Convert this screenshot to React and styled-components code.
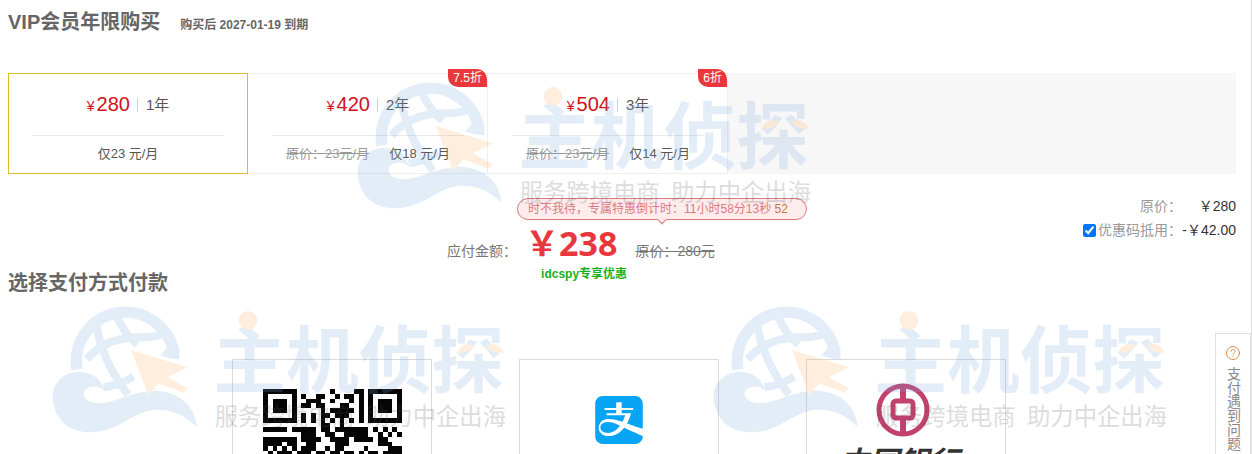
import React from 'react';
import styled, { createGlobalStyle } from 'styled-components';
import { SiAlipay } from 'react-icons/si';

const GlobalStyle = createGlobalStyle`
    * {
        box-sizing: border-box;
    }

    body {
        margin: 0;
        background: #fff;
        color: #666;
        font-family: "Liberation Sans", "Noto Sans CJK SC", sans-serif;
        font-size: 14px;
    }
`;

const Page = styled.div`
    position: relative;
    height: 100vh;
    margin-right: 1px;
    padding: 0 15px 0 8px;
    border-right: 1px solid #e2e2e2;
    overflow: hidden;
`;

const Header = styled.header`
    display: flex;
    align-items: baseline;
    gap: 20px;
    height: 43px;
    margin-bottom: 30px;
    line-height: 44px;
`;

const Title = styled.h1`
    margin: 0;
    font-size: 20px;
    font-weight: bold;
    color: #666;
`;

const Expire = styled.strong`
    font-size: 12px;
    color: #666;
`;

const Plans = styled.div`
    display: flex;
    background: #f7f7f7;
`;

const Plan = styled.button`
    position: relative;
    width: 240px;
    padding: 0 23px;
    border: 1px solid ${props => (props.$active ? '#dcbb28' : '#eee')};
    border-left-color: ${props => (props.$active ? '#dcbb28' : '#fff')};
    background: #fff;
    color: #555;
    font-family: inherit;
    cursor: pointer;
`;

const PlanPrice = styled.span`
    display: flex;
    align-items: center;
    justify-content: center;
    height: 62px;
    border-bottom: 1px solid #e8e8e8;
    font-size: 15px;
`;

const Money = styled.span`
    color: #d0111b;
    font-size: 14px;
    line-height: 24px;
`;

const Num = styled.span`
    margin-left: 2px;
    font-size: 20px;
`;

const Years = styled.span`
    margin-left: 7px;
    padding-left: 8px;
    border-left: 1px solid #ccc;
    line-height: 14px;
`;

const PlanMonth = styled.span`
    display: flex;
    justify-content: center;
    gap: 20px;
    height: 37px;
    font-size: 13px;
    line-height: 36px;
    white-space: nowrap;
`;

const OldPrice = styled.del`
    color: #999;
`;

const Badge = styled.span`
    position: absolute;
    top: -5px;
    right: 0;
    padding: 0 5px;
    border-radius: 0 10px 0 10px;
    background: #e8383d;
    color: #fff;
    font-size: 12px;
    line-height: 18px;
`;

const Checkout = styled.section`
    display: grid;
    grid-template-columns: 1fr auto 1fr;
    height: 124px;
`;

const PayTitle = styled.h2`
    align-self: end;
    margin: 0;
    font-size: 20px;
    line-height: 30px;
    color: #666;
`;

const Amount = styled.div`
    display: grid;
    grid-template-columns: 70px auto;
    align-content: start;
    margin-left: 10px;
    padding-top: 24px;
`;

const Countdown = styled.div`
    position: relative;
    grid-column: 2;
    padding: 0 18px 0 10px;
    border: 1px solid #dc7a7d;
    border-radius: 11px;
    background: #feeced;
    color: #dc7a7d;
    font-size: 12px;
    line-height: 20px;
    white-space: nowrap;

    &::after {
        content: '';
        position: absolute;
        left: 50%;
        bottom: -4px;
        width: 6px;
        height: 6px;
        border: solid #dc7a7d;
        border-width: 0 1px 1px 0;
        background: #feeced;
        transform: translateX(-50%) rotate(45deg);
    }
`;

const Tick = styled.span`
    color: #c87a32;
`;

const AmountLabel = styled.span`
    padding-top: 20px;
    line-height: 22px;
    color: #777;
    white-space: nowrap;
`;

const AmountRow = styled.div`
    display: flex;
    align-items: baseline;
    gap: 18px;
    height: 44px;
    padding-left: 8px;
    line-height: 46px;
    color: #777;
`;

const Total = styled.strong`
    color: #e8383d;
    font-family: "Open Sans", "Noto Sans CJK SC", sans-serif;
    font-size: 34px;
`;

const Discount = styled.strong`
    grid-column: 2;
    padding-left: 24px;
    color: #18b01c;
    font-size: 12px;
    line-height: 20px;
`;

const Summary = styled.div`
    display: flex;
    flex-direction: column;
    padding-top: 20px;
    line-height: 24px;
    color: #999;
`;

const SummaryRow = styled.div`
    display: flex;
    align-items: center;
    justify-content: flex-end;
`;

const Coupon = styled.label`
    display: flex;
    align-items: center;
    gap: 2px;
`;

const Check = styled.input`
    width: 13px;
    height: 13px;
    margin: 0;
`;

const SummaryValue = styled.span`
    width: 54px;
    color: #333;
    text-align: right;
    white-space: nowrap;
`;

const Payments = styled.div`
    display: flex;
    justify-content: center;
    gap: 87px;
    margin: 61px 6px 0 0;
`;

const Payment = styled.a`
    display: flex;
    align-items: flex-start;
    justify-content: center;
    width: 200px;
    height: 200px;
    padding-top: ${props => props.$top}px;
    border: 1px solid #dadada;
    color: #08a5f5;
`;

const Help = styled.a`
    position: fixed;
    top: 333px;
    right: 2px;
    display: flex;
    flex-direction: column;
    align-items: center;
    gap: 7px;
    width: 36px;
    height: 150px;
    padding-top: 12px;
    border: 1px solid #e2e2e2;
    background: #fff;
    color: #888;
    text-decoration: none;
`;

const HelpText = styled.span`
    writing-mode: vertical-rl;
    line-height: 18px;
`;

const Mark = styled.svg`
    position: absolute;
    left: ${props => props.$x}px;
    top: ${props => props.$y}px;
    width: 454px;
    height: 128px;
    opacity: 0.2;
    pointer-events: none;
`;

const plans = [
    { price: 280, years: 1, month: 23 },
    { price: 420, years: 2, month: 18, badge: '7.5折' },
    { price: 504, years: 3, month: 14, badge: '6折' },
];

const qrRows = [
    '11111110000000100001101111111',
    '10000010100110010110101000001',
    '10111010011100100010101011101',
    '10111010110110001100101011101',
    '10111010000010111110101011101',
    '10000010101011011100101000001',
    '11111110101010101010101111111',
    '00000000000011001000000000000',
    '11111011111011011111110101010',
    '00000000111001100111110010101',
    '11111110111100111101111011000',
    '11110110011000011100000011100',
    '10101010111001011000010000111',
    '01011101110110110110101101111',
];

function QrCode() {
    return (
        <svg width="139" height="68" viewBox="0 0 290 142" shapeRendering="crispEdges">
            {qrRows.map((row, y) =>
                row.split('').map((bit, x) =>
                    bit === '1' ? <rect key={x + '-' + y} x={x * 10} y={y * 10} width="10" height="10" fill="#050505" /> : null
                )
            )}
        </svg>
    );
}

function BankLogo() {
    return (
        <svg width="198" height="120" viewBox="0 0 198 120">
            <g fill="none" stroke="#c3416f">
                <circle cx="96" cy="27" r="24" strokeWidth="5" />
                <path d="M96 2v15M96 35v17" strokeWidth="6" />
                <rect x="86" y="18" width="20" height="17" rx="3" strokeWidth="5" />
            </g>
            <text x="32" y="90" fill="#333" fontSize="30" fontWeight="bold" fontStyle="italic">中国银行</text>
        </svg>
    );
}

function HelpIcon() {
    return (
        <svg width="14" height="14" viewBox="0 0 14 14" fill="none" stroke="#e08a4c" strokeLinecap="round">
            <circle cx="7" cy="7" r="6.5" />
            <path d="M5 5.4c.2-2.6 4.2-2.4 4 0C8.900 6.700 7 6.800 7 8.400" />
            <path d="M7 10.300v.2" />
        </svg>
    );
}

function Watermark({ x, y }) {
    return (
        <Mark $x={x} $y={y} viewBox="36 48 1362 384" aria-hidden="true">
            <g fill="none" stroke="#78a8de" strokeWidth="24">
                <path d="M111 238A147 147 0 1 1 402 190" strokeWidth="34" />
                <path d="M140 208C180 160 240 140 310 142Q350 142 388 124" />
                <path d="M168 100C180 180 215 250 264 314M232 82Q252 130 292 164" />
                <path d="M190 292Q238 286 280 260" />
            </g>
            <path d="M362 196L386 166L418 172V208Q390 208 362 196Z" fill="#78a8de" />
            <path d="M38 318C38 274 78 244 120 246C160 248 186 270 190 300C180 292 168 288 155 290C136 292 126 307 134 322C146 344 186 342 220 332C262 318 300 302 345 302C420 305 466 350 470 412C430 370 380 350 320 364C260 382 230 425 150 427C80 427 38 380 38 318Z" fill="#78a8de" />
            <path d="M273 180L443 232L383 262L443 295L430 308L355 280L325 316Z" fill="#ffaf5f" />
            <text x="520" y="290" fill="#78a8de" fontSize="218" fontWeight="bold">主机侦探</text>
            <circle cx="624" cy="91" r="28" fill="#ffaf5f" />
            <path d="M1250 188Q1270 150 1304 168Q1286 192 1250 188ZM1392 188Q1372 150 1338 168Q1356 192 1392 188Z" fill="#ffaf5f" />
            <g fill="#555" fontSize="70">
                <text x="524" y="404">服务跨境电商</text>
                <text x="978" y="404">助力中企出海</text>
            </g>
        </Mark>
    );
}

function App() {
    return (
        <Page>
            <GlobalStyle />
            <Header>
                <Title>VIP会员年限购买</Title>
                <Expire>购买后 2027-01-19 到期</Expire>
            </Header>

            <Plans>
                {plans.map((plan, i) => (
                    <Plan key={plan.years} type="button" $active={i === 0}>
                        <PlanPrice>
                            <Money>¥<Num>{plan.price}</Num></Money>
                            <Years>{plan.years}年</Years>
                        </PlanPrice>
                        <PlanMonth>
                            {plan.badge && <OldPrice>原价：23元/月</OldPrice>}
                            <span>仅{plan.month} 元/月</span>
                        </PlanMonth>
                        {plan.badge && <Badge>{plan.badge}</Badge>}
                    </Plan>
                ))}
            </Plans>

            <Checkout>
                <PayTitle>选择支付方式付款</PayTitle>
                <Amount>
                    <Countdown>时不我待，专属特惠倒计时：11小时58分13秒 <Tick>52</Tick></Countdown>
                    <AmountLabel>应付金额：</AmountLabel>
                    <AmountRow>
                        <Total>￥238</Total>
                        <del>原价：280元</del>
                    </AmountRow>
                    <Discount>idcspy专享优惠</Discount>
                </Amount>
                <Summary>
                    <SummaryRow>
                        <span>原价：</span>
                        <SummaryValue>￥280</SummaryValue>
                    </SummaryRow>
                    <SummaryRow>
                        <Coupon htmlFor="coupon">
                            <Check id="coupon" type="checkbox" defaultChecked />
                            优惠码抵用：
                        </Coupon>
                        <SummaryValue>-￥42.00</SummaryValue>
                    </SummaryRow>
                </Summary>
            </Checkout>

            <Payments>
                <Payment href="#qrcode" $top={29} aria-label="QR"><QrCode /></Payment>
                <Payment href="#alipay" $top={36} aria-label="Alipay"><SiAlipay size={48} /></Payment>
                <Payment href="#boc" $top={23}><BankLogo /></Payment>
            </Payments>

            <Watermark x={357} y={82} />
            <Watermark x={52} y={306} />
            <Watermark x={713} y={306} />

            <Help href="#help">
                <HelpIcon />
                <HelpText>支付遇到问题</HelpText>
            </Help>
        </Page>
    );
}

export default App;
